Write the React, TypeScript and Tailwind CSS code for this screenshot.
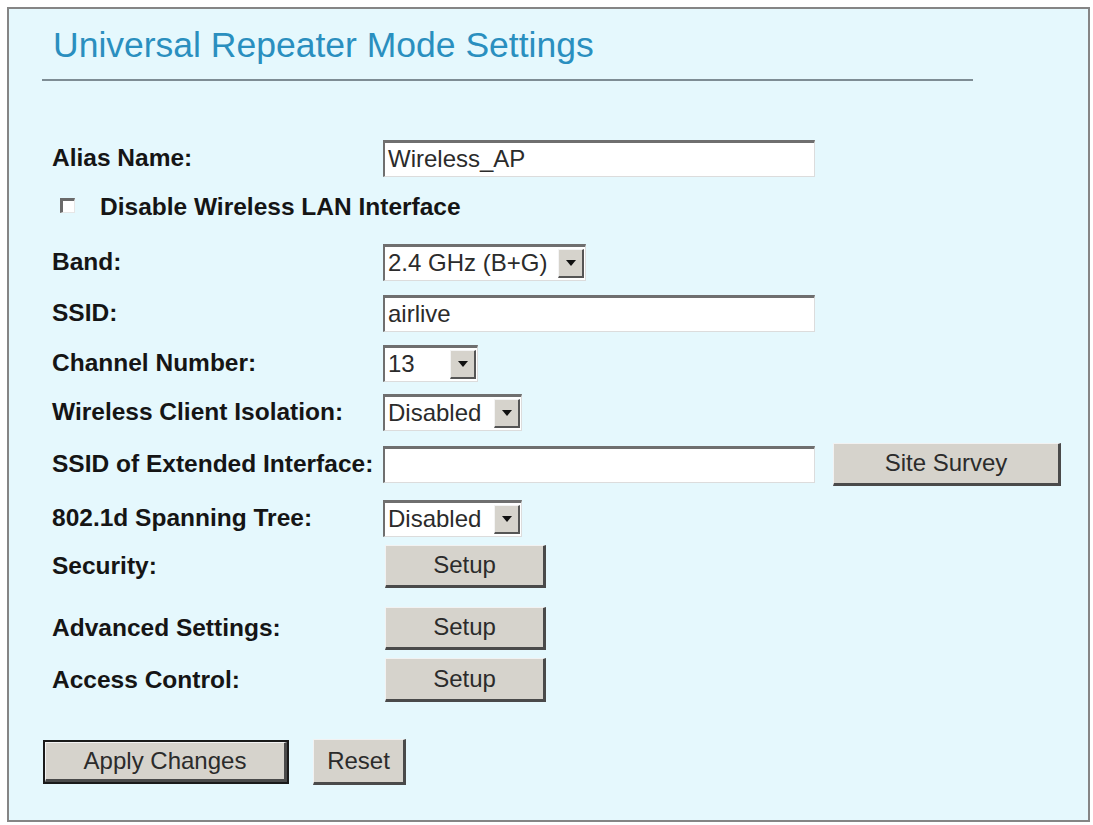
import React from "react";

const font = { fontFamily: '"Liberation Sans", Arial, sans-serif' };

function TextBox({ value, width }: { value: string; width: string }) {
  return (
    <div
      className={`${width} h-[37px] flex items-center bg-white border-t-[3px] border-l-[2px] border-b border-r border-t-[#6f6f6f] border-l-[#6f6f6f] border-b-[#dcdcdc] border-r-[#dcdcdc] pl-[3px] text-[24px] text-[#2b2b2b] leading-none`}
    >
      {value}
    </div>
  );
}

function Select({ value, width }: { value: string; width: string }) {
  return (
    <div
      className={`${width} h-[37px] flex items-stretch bg-white border-t-[3px] border-l-[2px] border-b border-r border-t-[#6f6f6f] border-l-[#6f6f6f] border-b-[#dcdcdc] border-r-[#dcdcdc] text-[24px] text-[#2b2b2b] leading-none`}
    >
      <div className="flex-1 flex items-center pl-[3px] whitespace-nowrap overflow-hidden">{value}</div>
      <div className="w-[26px] my-[2px] mr-[1px] flex items-center justify-center bg-[#d6d3cc] border-t border-l border-t-[#f4f4f4] border-l-[#f4f4f4] border-b-2 border-r-2 border-b-[#555] border-r-[#555]">
        <svg width="10" height="6" viewBox="0 0 10 6">
          <path d="M0 0 L10 0 L5 6 Z" fill="#111" />
        </svg>
      </div>
    </div>
  );
}

function Btn({ label, className }: { label: string; className: string }) {
  return (
    <div
      className={`${className} flex items-center justify-center bg-[#d6d3cc] border-t border-l border-t-[#f2f2f2] border-l-[#f2f2f2] border-b-[3px] border-r-[3px] border-b-[#4a4a4a] border-r-[#4a4a4a] text-[24px] text-[#2b2b2b] leading-none`}
    >
      {label}
    </div>
  );
}

function Row({ label, mt, children }: { label: string; mt: string; children: React.ReactNode }) {
  return (
    <div className={`${mt} h-[44px] flex items-center`}>
      <div className="w-[331px] shrink-0 text-[24.5px] font-bold text-[#151515] leading-none whitespace-nowrap">{label}</div>
      {children}
    </div>
  );
}

export default function App() {
  return (
    <div className="w-[1093px] h-[825px] bg-white pt-[7px] pl-[7px]" style={font}>
      <div className="w-[1083px] h-[815px] bg-[#e5f8fd] border-2 border-[#858585]">
        <h1 className="mt-[16px] ml-[44px] text-[35.5px] leading-[40px] text-[#2a8fbf] font-normal">
          Universal Repeater Mode Settings
        </h1>
        <div className="mt-[14px] ml-[33px] w-[931px] h-[2px] bg-[#7e8d94]" />

        <div className="pl-[43px]">
          <Row label="Alias Name:" mt="mt-[55px]">
            <TextBox value="Wireless_AP" width="w-[432px]" />
          </Row>

          <div className="mt-[5px] h-[44px] flex items-center">
            <div className="ml-[8px] shrink-0 w-[15px] h-[15px] -mt-[3px] bg-white border-t-[3px] border-l-[3px] border-t-[#6a6a6a] border-l-[#6a6a6a] border-b border-r border-b-[#e6e6e6] border-r-[#e6e6e6]" />
            <span className="ml-[25px] text-[24.5px] font-bold text-[#151515] leading-none">
              Disable Wireless LAN Interface
            </span>
          </div>

          <Row label="Band:" mt="mt-[11px]">
            <Select value="2.4 GHz (B+G)" width="w-[203px]" />
          </Row>
          <Row label="SSID:" mt="mt-[7px]">
            <TextBox value="airlive" width="w-[432px]" />
          </Row>
          <Row label="Channel Number:" mt="mt-[6px]">
            <Select value="13" width="w-[95px]" />
          </Row>
          <Row label="Wireless Client Isolation:" mt="mt-[5px]">
            <Select value="Disabled" width="w-[139px]" />
          </Row>
          <Row label="SSID of Extended Interface:" mt="mt-[8px]">
            <TextBox value="" width="w-[432px]" />
            <Btn label="Site Survey" className="ml-[18px] w-[228px] h-[43px]" />
          </Row>
          <Row label="802.1d Spanning Tree:" mt="mt-[10px]">
            <Select value="Disabled" width="w-[139px]" />
          </Row>
          <Row label="Security:" mt="mt-[4px]">
            <Btn label="Setup" className="ml-[2px] w-[161px] h-[43px]" />
          </Row>
          <Row label="Advanced Settings:" mt="mt-[18px]">
            <Btn label="Setup" className="ml-[2px] w-[161px] h-[43px]" />
          </Row>
          <Row label="Access Control:" mt="mt-[8px]">
            <Btn label="Setup" className="ml-[2px] w-[161px] h-[44px]" />
          </Row>

          <div className="mt-[38px] h-[44px] flex items-center -ml-[9px]">
            <div className="w-[246px] h-[44px] border-2 border-[#1a1a1a]">
              <Btn label="Apply Changes" className="w-full h-full" />
            </div>
            <Btn label="Reset" className="ml-[24px] w-[93px] h-[46px]" />
          </div>
        </div>
      </div>
    </div>
  );
}
